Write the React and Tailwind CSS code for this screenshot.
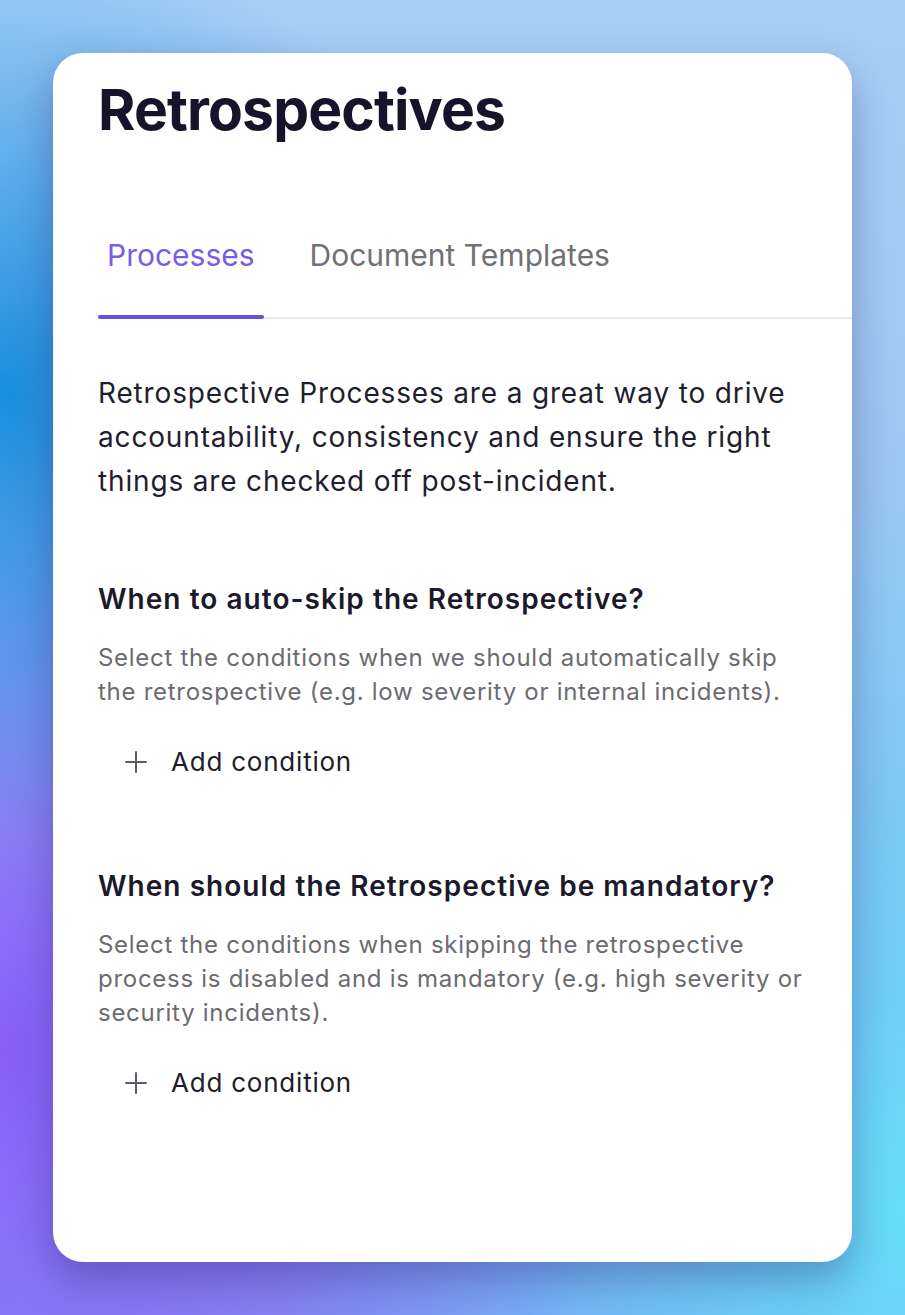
import React from 'react';

const font = { fontFamily: 'Inter, "Noto Sans", sans-serif' };

function PlusIcon() {
  return (
    <svg width="22" height="22" viewBox="0 0 22 22" fill="none" className="shrink-0">
      <path d="M11 1v20M1 11h20" stroke="#5b5b63" strokeWidth="2" strokeLinecap="round" />
    </svg>
  );
}

function AddCondition() {
  return (
    <button className="flex items-center gap-[24px] pl-[27px] text-[26px] leading-[36px] text-[#1e1d2c] tracking-[0.03em]">
      <PlusIcon />
      <span>Add condition</span>
    </button>
  );
}

function Section({ title, description, className }) {
  return (
    <div className={className}>
      <h2 className="text-[28px] leading-[34px] font-semibold text-[#1b1a2c] tracking-[0.037em]">{title}</h2>
      <p className="mt-[25px] text-[24px] leading-[34px] text-[#6b6b70] tracking-[0.03em]">{description}</p>
      <div className="mt-[35px]">
        <AddCondition />
      </div>
    </div>
  );
}

export default function App() {
  return (
    <div
      className="h-[1315px] w-full p-[53px] overflow-hidden bg-[radial-gradient(ellipse_55%_35%_at_0%_30%,#1a8ee0_0%,transparent_100%),radial-gradient(ellipse_70%_50%_at_0%_80%,#8a5ff8_0%,transparent_100%),radial-gradient(ellipse_70%_55%_at_100%_92%,#66defa_0%,transparent_100%),linear-gradient(to_bottom,#a8cff6_0%,#98c6f2_45%,#8098f0_100%)]"
      style={font}
    >
      <div className="h-[1209px] w-[799px] rounded-[30px] bg-white pl-[45px] pt-[28px] overflow-hidden shadow-[0_18px_40px_rgba(40,30,110,0.35)]">
        <h1 className="text-[57px] leading-none font-bold text-[#15142a] tracking-[-0.015em]">Retrospectives</h1>

        <div className="mt-[102px] flex gap-[37px] border-b-2 border-[#e8e8ec]">
          <button className="relative px-[9px] pb-[47px] text-[30px] leading-none text-[#7b5ce6]">
            Processes
            <span className="absolute left-0 right-0 -bottom-[2px] h-[4px] rounded-full bg-[#6a4ee6]" />
          </button>
          <button className="px-[9px] pb-[47px] text-[30px] leading-none text-[#707075]">
            Document Templates
          </button>
        </div>

        <div className="pr-[44px]">
          <p className="mt-[52px] text-[28px] leading-[44px] text-[#1f1e2e] tracking-[0.03em]">
            Retrospective Processes are a great way to drive accountability, consistency and ensure the right things are checked off post-incident.
          </p>

          <Section
            className="mt-[79px]"
            title="When to auto-skip the Retrospective?"
            description="Select the conditions when we should automatically skip the retrospective (e.g. low severity or internal incidents)."
          />

          <Section
            className="mt-[89px]"
            title="When should the Retrospective be mandatory?"
            description="Select the conditions when skipping the retrospective process is disabled and is mandatory (e.g. high severity or security incidents)."
          />
        </div>
      </div>
    </div>
  );
}
